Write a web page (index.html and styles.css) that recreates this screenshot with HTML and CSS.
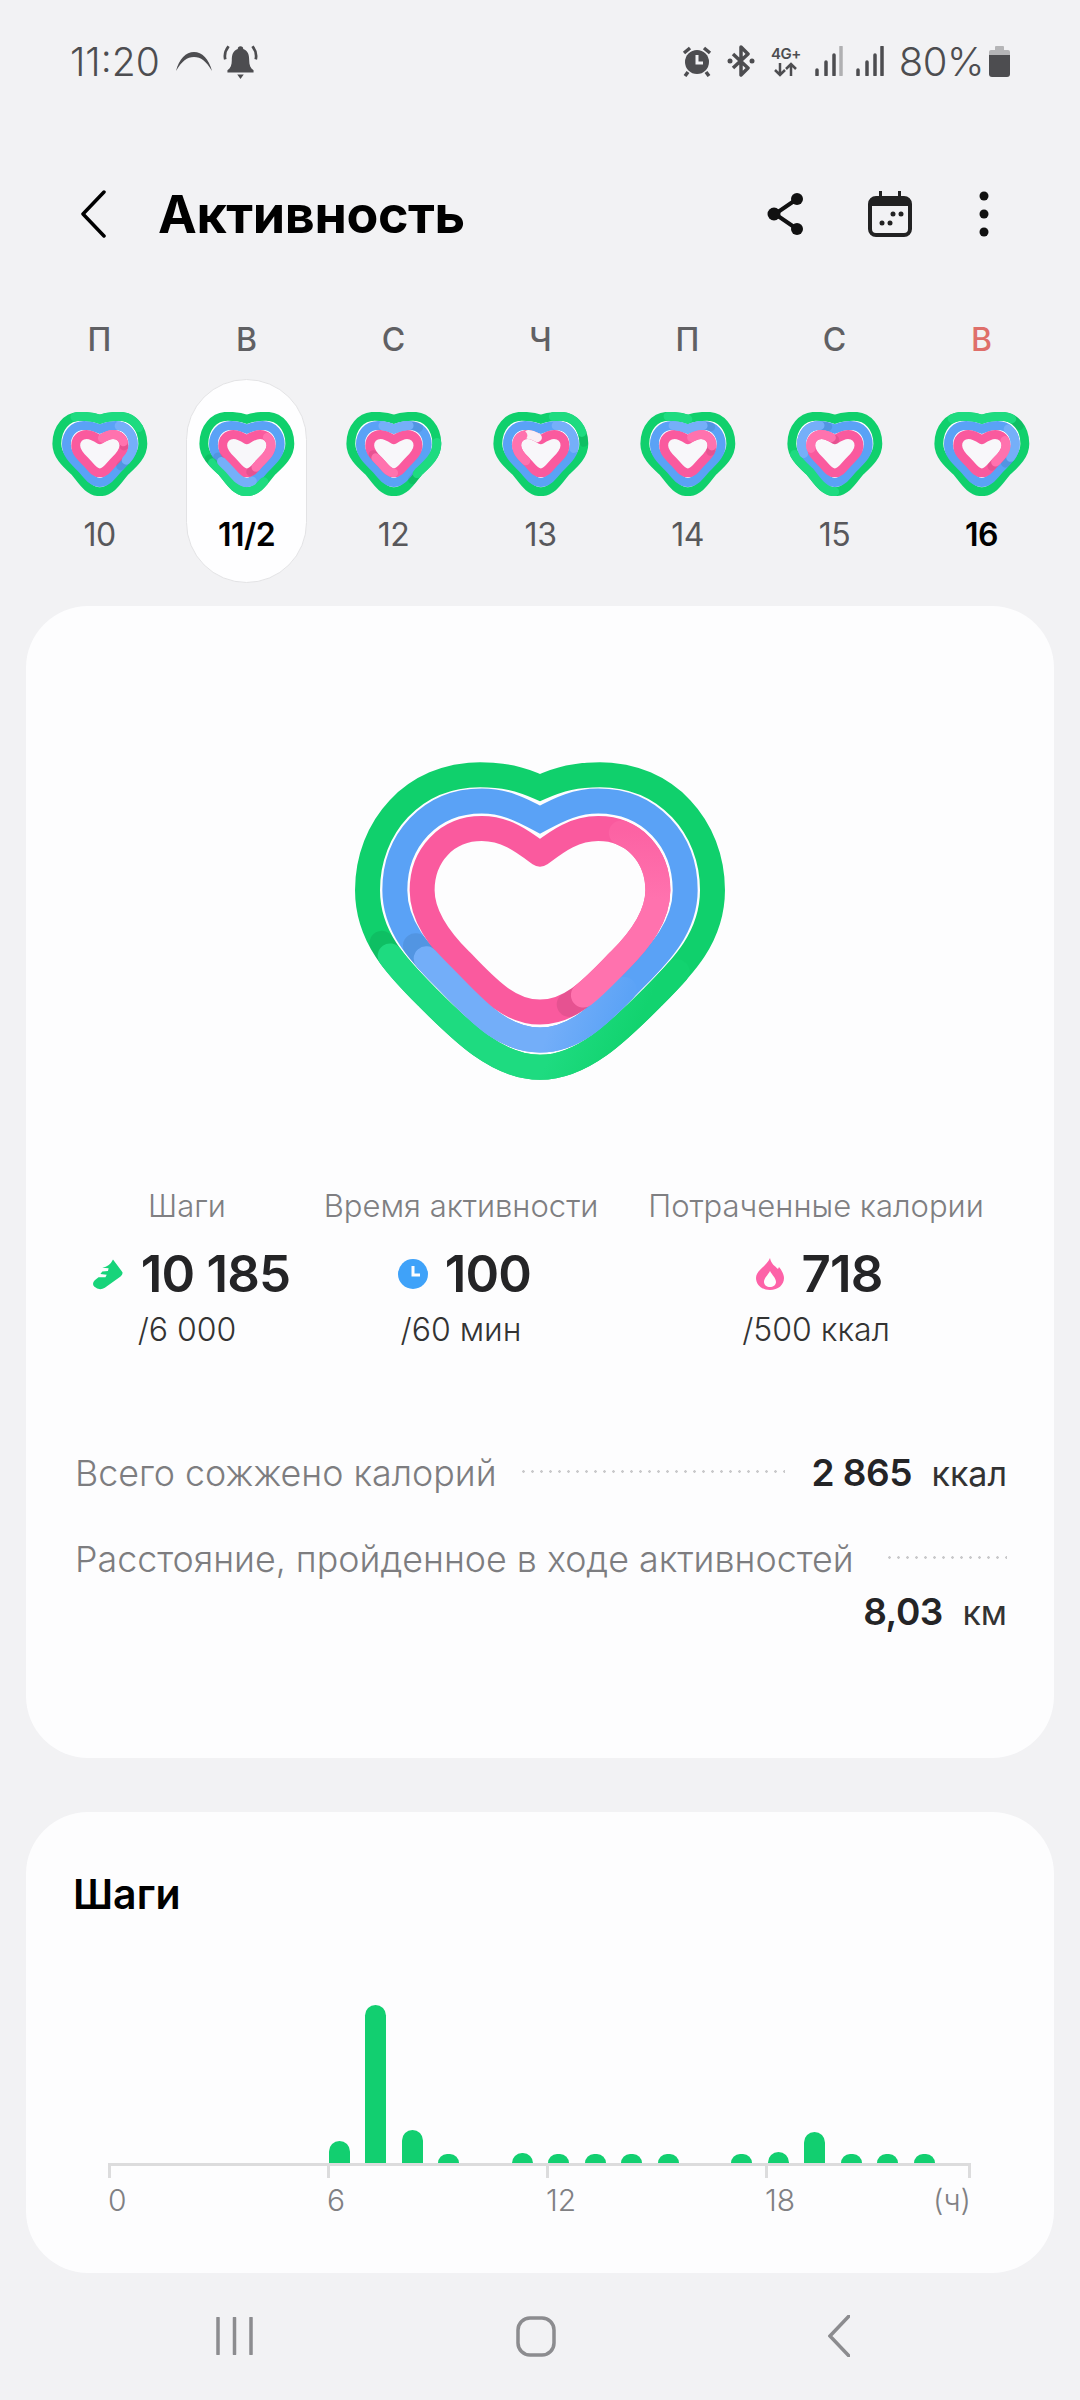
FILE: index.html
```html
<!DOCTYPE html>
<html lang="ru">
<head>
<meta charset="utf-8">
<title>Активность</title>
<link rel="stylesheet" href="styles.css">
</head>
<body>
<svg class="defs" width="0" height="0" aria-hidden="true">
  <defs>
    <path id="rg" pathLength="100" d="M660 172C720 145 770 133 840 133C1040 133 1178 290 1178 480C1178 620 1090 710 1000 800C900 900 790 1012 660 1012C530 1012 420 900 320 800C230 710 142 620 142 480C142 290 280 133 480 133C550 133 600 145 660 172Z"/>
    <path id="rb" pathLength="100" d="M660 268C720 235 770 212 835 212C990 212 1096 330 1096 480C1096 590 1020 670 950 740C860 830 780 930 660 930C540 930 460 830 370 740C300 670 224 590 224 480C224 330 330 212 485 212C550 212 600 235 660 268Z"/>
    <path id="rp" pathLength="100" d="M660 372C710 335 760 295 835 295C940 295 1014 375 1014 480C1014 560 960 630 900 690C830 760 760 846 660 846C560 846 490 760 420 690C360 630 306 560 306 480C306 375 380 295 485 295C560 295 610 335 660 372Z"/>
    <path id="mg" pathLength="100" d="M210 54C232 46 250 45 268 45C310 45 340 80 340 128C340 165 310 190 285 213C265 237 245 273 210 273C175 273 155 237 135 213C110 190 80 165 80 128C80 80 110 45 152 45C170 45 188 46 210 54Z"/>
    <path id="mb" pathLength="100" d="M210 84C228 76 245 73 258 73C290 73 311 98 311 130C311 160 290 178 268 200C248 220 235 245 210 245C185 245 172 220 152 200C130 178 109 160 109 130C109 98 130 73 162 73C175 73 192 76 210 84Z"/>
    <path id="mp" pathLength="100" d="M210 116C225 106 238 100 250 100C270 100 283 115 283 133C283 155 265 170 250 185C238 197 228 216 210 216C192 216 182 197 170 185C155 170 137 155 137 133C137 115 150 100 170 100C182 100 195 106 210 116Z"/>
    <g id="mini-rings" class="mini-group">
      <use href="#mg" class="mini-back"/>
      <use href="#mp" class="mini-inner"/>
      <use href="#mg" class="ring ring-g"/>
      <use href="#mb" class="ring ring-b"/>
      <use href="#mp" class="ring ring-p"/>
    </g>
  </defs>
</svg>

<header class="status">
  <span class="status-time">11:20</span>
  <svg class="ic-arc" viewBox="0 0 38 22"><path d="M1 21C4 9 11 2 19 2S34 9 37 21C31 11 26 7 19 7S7 11 1 21Z"/></svg>
  <svg class="ic-bell" viewBox="0 0 34 34"><path d="M17 3a2.500 2.500 0 0 1 2.500 2.500C24 7 25 11 25 16c0 4 1 7 4 9v2H5v-2c3-2 4-5 4-9 0-5 1-9 5.500-10.500A2.500 2.500 0 0 1 17 3ZM14 29h6l-3 4Z"/><path class="bell-wave" d="M6 3C3 7 2 11 3 15M28 3c3 4 4 8 3 12"/></svg>
  <span class="status-gap"></span>
  <svg class="ic-alarm" viewBox="0 0 30 31"><circle cx="15" cy="16" r="12"/><path class="wh" d="M15 9v8h6"/><path class="ear" d="M2 7l6-5M28 7l-6-5M6 26l-3 4M24 26l3 4"/></svg>
  <svg class="ic-bt" viewBox="0 0 28 32"><path class="bt" d="M6 9L21 23L14 30V2L21 9L6 23"/><circle cx="3" cy="16" r="2.500"/><circle cx="25" cy="16" r="2.500"/></svg>
  <span class="ic-net"><span class="net-text">4G+</span><svg class="ic-arrows" viewBox="0 0 30 15"><path d="M9 1v12M4 8l5 5 5-5M20 14V2M15 7l5-5 5 5"/></svg></span>
  <svg class="ic-signal" viewBox="0 0 28 30"><path d="M2 24v5M11 16v13M19 9v20"/><path class="dim" d="M26 1v28"/></svg>
  <svg class="ic-signal" viewBox="0 0 28 30"><path d="M2 24v5M11 16v13M19 9v20M26 1v28"/></svg>
  <span class="status-batt">80%</span>
  <svg class="ic-batt" viewBox="0 0 21 31"><path class="batt-top" d="M7 0h7a1 1 0 0 1 1 1v3h4a2 2 0 0 1 2 2v4H0V6a2 2 0 0 1 2-2h4V1a1 1 0 0 1 1-1Z"/><path d="M0 9h21v19a3 3 0 0 1-3 3H3a3 3 0 0 1-3-3Z"/></svg>
</header>

<div class="appbar">
  <svg class="ic-back" viewBox="0 0 26 48"><path d="M24 2L3 24L24 46"/></svg>
  <h1 class="title">Активность</h1>
  <svg class="ic-share" viewBox="0 0 38 44"><path class="share-line" d="M30 7L8 22L30 37"/><circle cx="30" cy="7" r="6"/><circle cx="7" cy="22" r="6.500"/><circle cx="30" cy="37" r="6"/></svg>
  <svg class="ic-cal" viewBox="0 0 44 46"><path fill-rule="evenodd" d="M11 0h3v5h16V0h3v5h3a8 8 0 0 1 8 8v25a8 8 0 0 1-8 8H8a8 8 0 0 1-8-8V13a8 8 0 0 1 8-8h3ZM4 15v23a4 4 0 0 0 4 4h28a4 4 0 0 0 4-4V15Z"/><circle cx="25" cy="23" r="2.500"/><circle cx="33" cy="23" r="2.500"/><circle cx="14" cy="32" r="2.500"/><circle cx="22" cy="32" r="2.500"/></svg>
  <svg class="ic-more" viewBox="0 0 10 46"><circle cx="5" cy="5" r="4.500"/><circle cx="5" cy="23" r="4.500"/><circle cx="5" cy="41" r="4.500"/></svg>
</div>

<nav class="week">
  <div class="day">
    <span class="day-letter">П</span>
    <div class="day-pill">
      <svg class="mini-heart" viewBox="67 32 287 254">
        <use href="#mini-rings"/>
        <use href="#mg" class="ring lap-g" stroke-dasharray="27 73" stroke-dashoffset="10"/>
        <use href="#mb" class="ring shade" stroke-dasharray="3 97" stroke-dashoffset="-33"/>
        <use href="#mb" class="ring lap-b" stroke-dasharray="22 78" stroke-dashoffset="-10"/>
        <use href="#mp" class="ring shade" stroke-dasharray="3 97" stroke-dashoffset="-20"/>
        <use href="#mp" class="ring lap-p" stroke-dasharray="18 82" stroke-dashoffset="-2"/>
      </svg>
      <span class="day-num">10</span>
    </div>
  </div>
  <div class="day">
    <span class="day-letter">В</span>
    <div class="day-pill is-selected">
      <svg class="mini-heart" viewBox="67 32 287 254">
        <use href="#mini-rings"/>
        <use href="#mg" class="ring shade" stroke-dasharray="3 97" stroke-dashoffset="-67"/>
        <use href="#mg" class="ring lap-g" stroke-dasharray="26 74" stroke-dashoffset="-42"/>
        <use href="#mb" class="ring shade" stroke-dasharray="3 97" stroke-dashoffset="-67"/>
        <use href="#mb" class="ring lap-b" stroke-dasharray="20 80" stroke-dashoffset="-47"/>
        <use href="#mp" class="ring shade" stroke-dasharray="3 97" stroke-dashoffset="-44"/>
        <use href="#mp" class="ring lap-p" stroke-dasharray="26 74" stroke-dashoffset="-16"/>
      </svg>
      <span class="day-num is-strong">11/2</span>
    </div>
  </div>
  <div class="day">
    <span class="day-letter">С</span>
    <div class="day-pill">
      <svg class="mini-heart" viewBox="67 32 287 254">
        <use href="#mini-rings"/>
        <use href="#mg" class="ring shade" stroke-dasharray="3 97" stroke-dashoffset="-38"/>
        <use href="#mg" class="ring lap-g" stroke-dasharray="15 85" stroke-dashoffset="-23"/>
        <use href="#mb" class="ring shade" stroke-dasharray="3 97" stroke-dashoffset="-10"/>
        <use href="#mb" class="ring lap-b" stroke-dasharray="14 86" stroke-dashoffset="6"/>
        <use href="#mp" class="ring shade" stroke-dasharray="3 97" stroke-dashoffset="-67"/>
        <use href="#mp" class="ring lap-p" stroke-dasharray="17 83" stroke-dashoffset="-50"/>
      </svg>
      <span class="day-num">12</span>
    </div>
  </div>
  <div class="day">
    <span class="day-letter">Ч</span>
    <div class="day-pill">
      <svg class="mini-heart" viewBox="67 32 287 254">
        <use href="#mini-rings"/>
        <use href="#mg" class="ring shade" stroke-dasharray="3 97" stroke-dashoffset="-20"/>
        <use href="#mg" class="ring lap-g" stroke-dasharray="14 86" stroke-dashoffset="-5"/>
        <use href="#mb" class="ring lap-b" stroke-dasharray="17 83" stroke-dashoffset="-8"/>
        <use href="#mp" class="ring gap" stroke-dasharray="7 93" stroke-dashoffset="-90"/>
        <use href="#mp" class="ring lap-p" stroke-dasharray="22 78" stroke-dashoffset="-64"/>
      </svg>
      <span class="day-num">13</span>
    </div>
  </div>
  <div class="day">
    <span class="day-letter">П</span>
    <div class="day-pill">
      <svg class="mini-heart" viewBox="67 32 287 254">
        <use href="#mini-rings"/>
        <use href="#mg" class="ring lap-g" stroke-dasharray="8 92" stroke-dashoffset="8"/>
        <use href="#mb" class="ring shade" stroke-dasharray="3 97" stroke-dashoffset="-9"/>
        <use href="#mb" class="ring lap-b" stroke-dasharray="16 84" stroke-dashoffset="8"/>
        <use href="#mp" class="ring shade" stroke-dasharray="3 97" stroke-dashoffset="-24"/>
        <use href="#mp" class="ring lap-p" stroke-dasharray="20 80" stroke-dashoffset="-3"/>
      </svg>
      <span class="day-num">14</span>
    </div>
  </div>
  <div class="day">
    <span class="day-letter">С</span>
    <div class="day-pill">
      <svg class="mini-heart" viewBox="67 32 287 254">
        <use href="#mini-rings"/>
        <use href="#mg" class="ring lap-g" stroke-dasharray="22 78" stroke-dashoffset="-50"/>
        <use href="#mb" class="ring shade" stroke-dasharray="3 97" stroke-dashoffset="-93"/>
        <use href="#mb" class="ring lap-b" stroke-dasharray="20 80" stroke-dashoffset="-72"/>
        <use href="#mp" class="ring shade" stroke-dasharray="3 97" stroke-dashoffset="-97"/>
        <use href="#mp" class="ring lap-p" stroke-dasharray="22 78" stroke-dashoffset="-75"/>
      </svg>
      <span class="day-num">15</span>
    </div>
  </div>
  <div class="day">
    <span class="day-letter is-sunday">В</span>
    <div class="day-pill">
      <svg class="mini-heart" viewBox="67 32 287 254">
        <use href="#mini-rings"/>
        <use href="#mg" class="ring shade" stroke-dasharray="3 97" stroke-dashoffset="-13"/>
        <use href="#mg" class="ring lap-g" stroke-dasharray="24 76" stroke-dashoffset="12"/>
        <use href="#mb" class="ring shade" stroke-dasharray="3 97" stroke-dashoffset="-31"/>
        <use href="#mb" class="ring lap-b" stroke-dasharray="16 84" stroke-dashoffset="-14"/>
        <use href="#mp" class="ring shade" stroke-dasharray="3 97" stroke-dashoffset="-38"/>
        <use href="#mp" class="ring lap-p" stroke-dasharray="18 82" stroke-dashoffset="-19"/>
      </svg>
      <span class="day-num is-strong">16</span>
    </div>
  </div>
</nav>

<main class="cards">
  <section class="card card-summary">
    <svg class="big-heart" viewBox="103 95 1114 955">
      <defs>
        <linearGradient id="lapG" gradientUnits="userSpaceOnUse" x1="180" y1="660" x2="900" y2="1000"><stop offset="0" stop-color="#1edb80"/><stop offset=".75" stop-color="#1edb80"/><stop offset="1" stop-color="#12d36f"/></linearGradient>
        <linearGradient id="lapB" gradientUnits="userSpaceOnUse" x1="300" y1="690" x2="880" y2="920"><stop offset="0" stop-color="#73aef9"/><stop offset=".7" stop-color="#73aef9"/><stop offset="1" stop-color="#5ca3f6"/></linearGradient>
        <linearGradient id="lapP" gradientUnits="userSpaceOnUse" x1="780" y1="810" x2="800" y2="290"><stop offset="0" stop-color="#ff72ae"/><stop offset=".6" stop-color="#ff72ae"/><stop offset="1" stop-color="#fc62a3"/></linearGradient>
      </defs>
      <use href="#rg" class="ring ring-g"/>
      <use href="#rb" class="ring ring-b"/>
      <use href="#rp" class="ring ring-p"/>
      <use href="#rg" class="ring shade" stroke-dasharray="2 98" stroke-dashoffset="-68.500"/>
      <use href="#rg" class="ring" stroke="url(#lapG)" stroke-dasharray="36 64" stroke-dashoffset="-33"/>
      <use href="#rb" class="ring shade" stroke-dasharray="2 98" stroke-dashoffset="-67"/>
      <use href="#rb" class="ring" stroke="url(#lapB)" stroke-dasharray="29 71" stroke-dashoffset="-38"/>
      <use href="#rp" class="ring shade" stroke-dasharray="2 98" stroke-dashoffset="-43.500"/>
      <use href="#rp" class="ring" stroke="url(#lapP)" stroke-dasharray="30 70" stroke-dashoffset="-13"/>
    </svg>

    <div class="stats">
      <div class="stat">
        <span class="stat-label">Шаги</span>
        <span class="stat-value">
          <svg class="ic-shoe" viewBox="30 45 105 105"><path d="M100 50L130 90Q132 98 124 104L74 140Q56 150 40 136Q32 126 42 116L54 106L76 106L80 98L60 96L66 88L84 86L86 78L66 76Q90 72 100 50Z"/></svg>10 185</span>
        <span class="stat-goal">/6 000</span>
      </div>
      <div class="stat">
        <span class="stat-label">Время активности</span>
        <span class="stat-value">
          <svg class="ic-clock" viewBox="0 0 30 30"><circle cx="15" cy="15" r="15"/><path d="M15 7v9h7"/></svg>100</span>
        <span class="stat-goal">/60 мин</span>
      </div>
      <div class="stat">
        <span class="stat-label">Потраченные калории</span>
        <span class="stat-value">
          <svg class="ic-flame" viewBox="0 0 28 32"><path fill-rule="evenodd" d="M14 0C15 6 19 8 22 11L23 9C27 14 28 18 28 20C28 27 22 32 14 32C6 32 0 27 0 20C0 12 11 8 14 0ZM14 13C12 17 8 20 8 24C8 27 11 29 14 29C17 29 20 27 20 24C20 20 16 17 14 13Z"/></svg>718</span>
        <span class="stat-goal">/500 ккал</span>
      </div>
    </div>

    <dl class="totals">
      <div class="total">
        <dt class="total-label">Всего сожжено калорий</dt>
        <span class="leader"></span>
        <dd class="total-value"><b class="total-num">2 865</b> ккал</dd>
      </div>
      <div class="total">
        <dt class="total-label">Расстояние, пройденное в ходе активностей</dt>
        <span class="leader"></span>
        <dd class="total-value total-value-wrap"><b class="total-num">8,03</b> км</dd>
      </div>
    </dl>
  </section>

  <section class="card card-steps">
    <h2 class="card-title">Шаги</h2>
    <div class="bars">
      <i class="slot"></i><i class="slot"></i><i class="slot"></i><i class="slot"></i><i class="slot"></i><i class="slot"></i>
      <i class="slot"><b class="bar" style="height:22px"></b></i>
      <i class="slot"><b class="bar" style="height:158px"></b></i>
      <i class="slot"><b class="bar" style="height:33px"></b></i>
      <i class="slot"><b class="bar" style="height:9px"></b></i>
      <i class="slot"></i>
      <i class="slot"><b class="bar" style="height:10px"></b></i>
      <i class="slot"><b class="bar" style="height:9px"></b></i>
      <i class="slot"><b class="bar" style="height:9px"></b></i>
      <i class="slot"><b class="bar" style="height:9px"></b></i>
      <i class="slot"><b class="bar" style="height:9px"></b></i>
      <i class="slot"></i>
      <i class="slot"><b class="bar" style="height:9px"></b></i>
      <i class="slot"><b class="bar" style="height:11px"></b></i>
      <i class="slot"><b class="bar" style="height:31px"></b></i>
      <i class="slot"><b class="bar" style="height:9px"></b></i>
      <i class="slot"><b class="bar" style="height:9px"></b></i>
      <i class="slot"><b class="bar" style="height:9px"></b></i>
    </div>
    <div class="axis">
      <span class="tick"></span><span class="tick"></span><span class="tick"></span><span class="tick tick-last"></span>
      <span class="axis-label">0</span><span class="axis-label">6</span><span class="axis-label">12</span><span class="axis-label axis-label-last"><span>18</span><span>(ч)</span></span>
    </div>
  </section>
</main>

<footer class="navbar">
  <svg class="nav-recent" viewBox="0 0 37 38"><path d="M2 1v36M18.500 1v36M35 1v36"/></svg>
  <svg class="nav-home" viewBox="0 0 40 41"><rect x="2" y="2" width="36" height="37" rx="12"/></svg>
  <svg class="nav-back" viewBox="0 0 22 42"><path d="M21 1L2 21L21 41"/></svg>
</footer>
</body>
</html>
```

FILE: styles.css
```css
* { box-sizing: border-box; }
html, body { margin: 0; padding: 0; }
body {
  width: 1080px;
  height: 2400px;
  overflow: hidden;
  background: #f2f2f4;
  font-family: "Inter", "Roboto", "Liberation Sans", sans-serif;
  color: #222;
  display: flex;
  flex-direction: column;
}
.defs { position: absolute; }
svg { display: block; flex: none; }

/* status bar */
.status {
  display: flex;
  align-items: center;
  height: 42px;
  margin-top: 40px;
  padding: 0 70px;
  color: #4d4d50;
  fill: #4d4d50;
}
.status-time { font-size: 39px; font-weight: 300; width: 94px; white-space: nowrap; }
.ic-arc { width: 38px; height: 22px; margin-left: 11px; }
.ic-bell { width: 37px; height: 37px; margin-left: 9px; }
.bell-wave { fill: none; stroke: #4d4d50; stroke-width: 2.500px; }
.status-gap { flex: 1; }
.ic-alarm { width: 30px; height: 31px; }
.ic-alarm .wh { fill: none; stroke: #f2f2f4; stroke-width: 3px; }
.ic-alarm .ear { fill: none; stroke: #4d4d50; stroke-width: 3.500px; }
.ic-bt { width: 28px; height: 32px; margin-left: 15px; }
.bt { fill: none; stroke: #4d4d50; stroke-width: 3.500px; stroke-linejoin: round; }
.ic-net { display: flex; flex-direction: column; align-items: center; width: 32px; margin-left: 15px; }
.net-text { font-size: 15px; font-weight: 600; line-height: 17px; letter-spacing: -.5px; }
.ic-arrows { width: 30px; height: 15px; fill: none; stroke: #4d4d50; stroke-width: 2.500px; }
.ic-signal { width: 28px; height: 30px; margin-left: 13px; fill: none; stroke: #4d4d50; stroke-width: 3.500px; stroke-linecap: round; }
.ic-signal .dim { stroke: #b0b0b2; }
.status-batt { font-size: 40px; font-weight: 300; margin-left: 15px; letter-spacing: -.5px; }
.ic-batt { width: 21px; height: 31px; margin-left: 5px; }
.batt-top { fill: #b5b5b7; }

/* app bar */
.appbar {
  display: flex;
  align-items: center;
  height: 120px;
  margin-top: 72px;
  padding-left: 80px;
}
.ic-back { width: 26px; height: 48px; fill: none; stroke: #000; stroke-width: 3.500px; stroke-linecap: round; stroke-linejoin: round; }
.title { margin: 0 0 0 52px; width: 609px; font-size: 52px; font-weight: 700; letter-spacing: -.4px; color: #000; }
.ic-share { width: 38px; height: 44px; fill: #111; }
.share-line { fill: none; stroke: #111; stroke-width: 4px; }
.ic-cal { width: 44px; height: 46px; margin-left: 63px; fill: #222; }
.ic-more { width: 10px; height: 46px; margin-left: 67px; fill: #111; }

/* week strip */
.week {
  display: grid;
  grid-template-columns: repeat(7, 147px);
  padding-left: 26px;
  margin-top: 46px;
}
.day { display: flex; flex-direction: column; align-items: center; }
.day-letter { font-size: 32px; font-weight: 500; line-height: 40px; color: #606063; }
.is-sunday { color: #df6f6a; }
.day-pill {
  display: flex;
  flex-direction: column;
  align-items: center;
  width: 121px;
  height: 204px;
  margin-top: 19px;
  padding-top: 32px;
  border-radius: 61px;
  border: 1px solid transparent;
}
.is-selected { background: #fefeff; border-color: #e3e3e5; }
.mini-heart { width: 96px; height: 84px; }
.day-num { margin-top: 19px; font-size: 32px; line-height: 40px; font-weight: 400; color: #58585b; letter-spacing: -.5px; }
.is-strong { font-weight: 600; color: #000; }

/* heart rings */
.mini-back { fill: #fff; stroke: none; }
.mini-inner { fill: #f8f7fa; stroke: none; }
.ring { fill: none; stroke-width: 75; stroke-linecap: round; }
.mini-group .ring, .mini-heart .ring { stroke-width: 27; }
.ring-g { stroke: #10d06c; stroke-linecap: butt; }
.ring-b { stroke: #5aa2f6; stroke-linecap: butt; }
.ring-p { stroke: #fa5a9e; stroke-linecap: butt; stroke-linejoin: round; }
.lap-g { stroke: #1edb80; }
.lap-b { stroke: #75aff9; }
.lap-p { stroke: #ff72ae; }
.shade { stroke: #000; stroke-opacity: .08; }
.gap { stroke: #f8eef4; }

/* cards */
.cards {
  display: flex;
  flex-direction: column;
  gap: 54px;
  margin-top: 23px;
  padding: 0 26px;
}
.card { background: #fdfdfe; border-radius: 62px; }
.card-summary { height: 1152px; padding-top: 156px; }
.big-heart { width: 372px; height: 318px; margin: 0 auto; }

.stats {
  display: grid;
  grid-template-columns: 222px 326px 384px;
  margin: 106px 0 0 50px;
}
.stat { display: flex; flex-direction: column; align-items: center; }
.stat-label { font-size: 31px; line-height: 40px; font-weight: 300; color: #7f7f82; white-space: nowrap; }
.stat-value {
  display: flex;
  align-items: center;
  gap: 17px;
  margin-top: 18px;
  margin-left: 7px;
  font-size: 51px;
  line-height: 60px;
  font-weight: 600;
  letter-spacing: -.8px;
  color: #242426;
  white-space: nowrap;
}
.stat-goal { margin-top: 6px; font-size: 32px; line-height: 40px; font-weight: 300; color: #333; white-space: nowrap; }
.ic-shoe { width: 33px; height: 33px; fill: #17d47a; }
.ic-clock { width: 30px; height: 30px; fill: #3fa2f9; }
.ic-clock path { fill: none; stroke: #fdfdfe; stroke-width: 3px; }
.ic-flame { width: 28px; height: 32px; fill: #fd62a8; }

.totals { margin: 100px 0 0; padding: 0 47px 0 49px; }
.total {
  display: flex;
  flex-wrap: wrap;
  align-items: flex-start;
  margin-bottom: 39px;
}
.total-label { font-size: 35.800px; line-height: 46px; font-weight: 300; color: #7d7d80; white-space: nowrap; }
.leader {
  flex: 1 1 0;
  min-width: 0;
  height: 3px;
  margin: 20px 26px 0 25px;
  background: radial-gradient(circle at 1.500px 1.500px, #c9c9cb 1.200px, transparent 1.500px) repeat-x;
  background-size: 9px 3px;
}
.total-value { margin: 0; font-size: 34px; line-height: 46px; font-weight: 400; color: #333; white-space: nowrap; }
.total-num { font-size: 37px; font-weight: 600; color: #242426; margin-right: 10px; letter-spacing: -.5px; }
.total-value-wrap { flex: 0 0 100%; text-align: right; margin-top: 7px; }
.total:last-child .leader { margin: 20px 0 0 34px; }

/* steps card */
.card-steps { height: 461px; padding: 60px 0 0 82px; }
.card-title { margin: 0 0 0 -35px; font-size: 41px; line-height: 44px; font-weight: 600; color: #000; }
.bars { display: flex; align-items: flex-end; height: 158px; margin-top: 89px; }
.slot { display: flex; align-items: flex-end; width: 36.600px; height: 100%; padding-left: 1px; }
.bar { display: block; width: 21px; background: #12cf70; border-radius: 10.500px 10.500px 0 0; }
.axis {
  display: grid;
  grid-template-columns: 219px 219px 219px 206px;
  width: 863px;
  border-top: 3px solid #dcdcdd;
}
.tick { height: 12px; border-left: 3px solid #dcdcdd; }
.tick-last { border-right: 3px solid #dcdcdd; }
.axis-label { margin-top: 4px; font-size: 30px; line-height: 36px; font-weight: 300; color: #808083; }
.axis-label-last { display: flex; justify-content: space-between; }

/* navigation */
.navbar {
  display: flex;
  align-items: center;
  gap: 263px;
  margin-top: 42px;
  padding-left: 216px;
}
.navbar svg { fill: none; stroke: #8c8c8f; stroke-width: 3.500px; stroke-linecap: round; }
.nav-recent { width: 37px; height: 38px; }
.nav-home { width: 40px; height: 41px; }
.nav-back { width: 22px; height: 42px; margin-left: 9px; }
```
